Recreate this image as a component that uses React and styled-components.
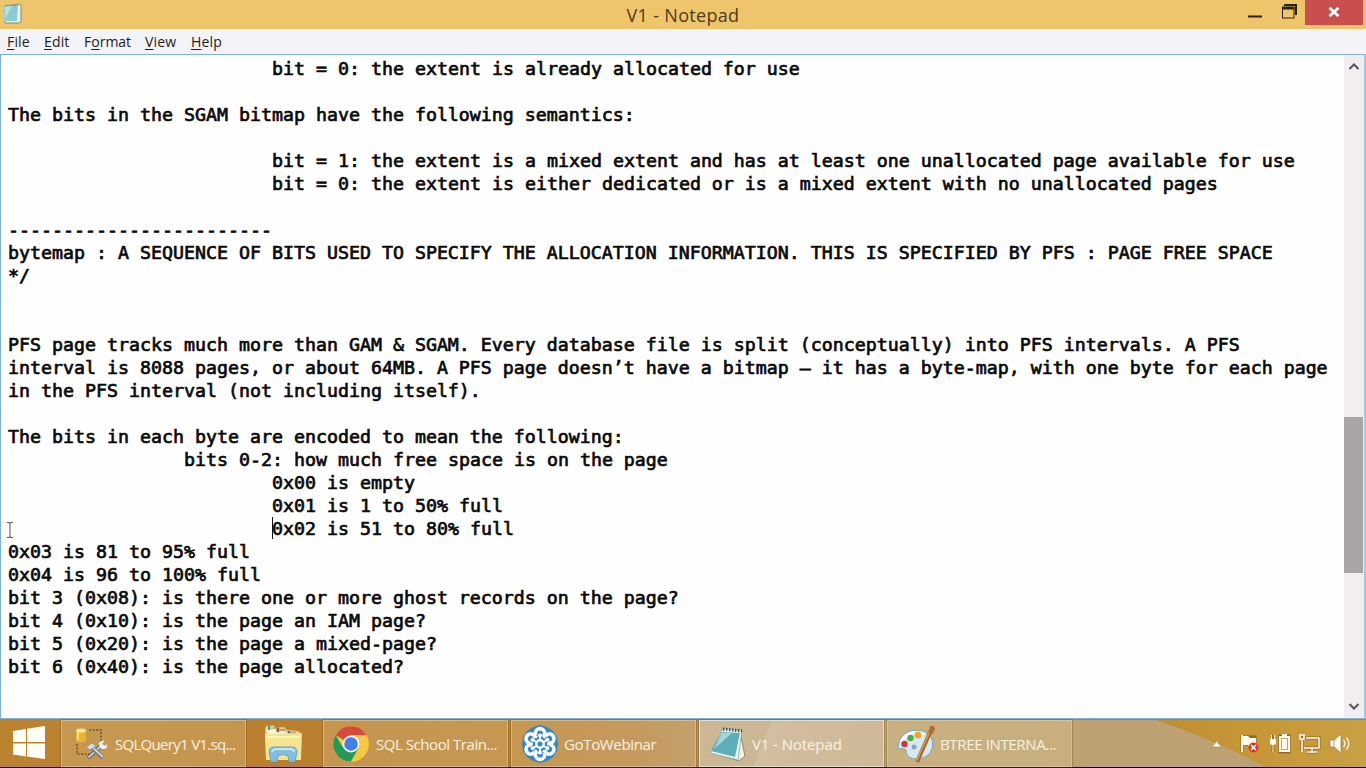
import React from "react";
import styled, { createGlobalStyle } from "styled-components";

const Global = createGlobalStyle`
  * { box-sizing: border-box; }
  body { margin: 0; overflow: hidden; background: #000; }
`;

const Screen = styled.div`
  width: 1366px;
  height: 768px;
  display: flex;
  flex-direction: column;
  font-family: "Open Sans", "Noto Sans", sans-serif;
  background: #000;
`;

const TitleBar = styled.header`
  height: 29px;
  flex: none;
  display: grid;
  grid-template-columns: 200px 1fr 200px;
  background: #efc56c;
`;

const AppIcon = styled.svg`
  margin: 3px 0 0 3px;
`;

const Title = styled.h1`
  margin: 0;
  padding-top: 1px;
  text-align: center;
  font-size: 18px;
  font-weight: 400;
  line-height: 28px;
  letter-spacing: ${(p) => p.$track}px;
  color: #4d3c18;
`;

const Controls = styled.div`
  display: flex;
  justify-content: flex-end;
  padding-right: 3px;
`;

const CloseButton = styled.div`
  width: 58px;
  height: 25px;
  margin-left: 7px;
  display: flex;
  align-items: center;
  justify-content: center;
  padding-bottom: 2px;
  background: #c94f4f;
`;

const MenuBar = styled.nav`
  height: 25px;
  flex: none;
  display: flex;
  padding-left: 7px;
  background: #f4f3f7;
`;

const MenuItem = styled.span`
  width: ${(p) => p.$w}px;
  font-size: 14px;
  line-height: 25px;
  letter-spacing: ${(p) => p.$track}px;
  white-space: nowrap;
  color: #1d1d20;
  u { text-decoration-thickness: 1px; text-underline-offset: 2px; }
`;

const Body = styled.main`
  height: 665px;
  flex: none;
  display: flex;
  border: 1px solid #7fb0d6;
  border-right-width: 2px;
  border-right-color: #9ccbe6;
  background: #fefefe;
`;

const Editor = styled.div`
  position: relative;
  flex: 1;
  padding: 2px 0 0 7px;
  font-family: "DejaVu Sans Mono", monospace;
  font-size: 18.271px;
  line-height: 23px;
  color: #0a0a0a;
  -webkit-text-stroke: 0.7px #0a0a0a;
`;

const Line = styled.div`
  height: 23px;
  padding-left: ${(p) => p.$indent * 11}px;
  white-space: pre;
`;

const Caret = styled.i`
  position: absolute;
  left: 271px;
  top: 462px;
  width: 1px;
  height: 22px;
  background: #111;
`;

const Pointer = styled.svg`
  position: absolute;
  left: 5px;
  top: 466px;
`;

const ScrollBar = styled.div`
  width: 20px;
  display: flex;
  flex-direction: column;
  align-items: center;
  justify-content: space-between;
  background: #f0eef1;
`;

const Thumb = styled.div`
  width: 20px;
  height: 156px;
  margin-top: 322px;
  margin-bottom: 105px;
  border-right: 1px solid #f0eef1;
  background: #a7a5a7;
`;

const TaskBar = styled.footer`
  height: 48px;
  flex: none;
  display: flex;
  align-items: stretch;
  border-top: 1px solid #8a8a70;
  background: linear-gradient(90deg, #bb8330 0, #b97f2f 250px, #ba8132 515px, #b98545 640px, #b49462 720px, #bda473 900px, #bda172 1100px, #bda172 1366px);
  position: relative;
`;

const Wallpaper = styled.svg`
  position: absolute;
  right: 0;
  top: 0;
`;

const Start = styled.div`
  width: 61px;
  display: flex;
  padding: 6px 0 0 12px;
`;

const Task = styled.div`
  width: 185px;
  margin-right: ${(p) => p.$gap || 3}px;
  display: flex;
  align-items: center;
  padding-left: ${(p) => p.$pad || 11}px;
  gap: ${(p) => p.$space}px;
  border: 1px solid ${(p) => (p.$active ? "#e6dcc8" : "rgba(236, 214, 168, 0.5)")};
  background: ${(p) => (p.$active
    ? "linear-gradient(112deg, #ccb794 0 66px, #d2bea0 67px, #cdb996 100%)"
    : "rgba(231, 208, 163, 0.28)")};
  box-shadow: 0 0 0 1px rgba(120, 80, 25, 0.35);
`;

const Label = styled.span`
  font-size: 15px;
  line-height: 20px;
  letter-spacing: ${(p) => p.$track}px;
  white-space: nowrap;
  color: #fbf2e2;
`;

const Pinned = styled.div`
  width: 76px;
  padding: 3px 0 0 15px;
`;

const Tray = styled.div`
  position: relative;
  flex: 1;
  display: flex;
  align-items: center;
  justify-content: flex-end;
  padding: 1px 15px 0 0;
`;

const NotepadSmall = () => (
  <AppIcon width="20" height="22" viewBox="0 0 20 22">
    <path d="M2 3L16 1l2 1v17l-2 1H2z" fill="#e9f3ee" stroke="#8a8a68" />
    <path d="M1 3l14-1-1 16H1z" fill="#8ccbd5" />
    <path d="M2 4l7-1-7 13z" fill="#b9e2e4" />
    <path d="M2 2.500h13" stroke="#5f8f92" strokeDasharray="1 1" />
  </AppIcon>
);

const WindowButtons = () => (
  <svg width="52" height="25" viewBox="0 0 52 25">
    <path d="M2 16.500h14" stroke="#292217" strokeWidth="2" />
    <path d="M38 5h12v10" fill="none" stroke="#292217" strokeWidth="2" />
    <rect x="36.500" y="8" width="11.500" height="10" fill="#efc56c" stroke="#292217" />
    <path d="M36 8h12.500" stroke="#292217" strokeWidth="3" />
  </svg>
);

const Chevron = ({ down }) => (
  <svg width="19" height="23" viewBox="0 0 19 23">
    <path d={down ? "M4.500 9l4.500 4.500L13.500 9" : "M4.500 14L9 9.500l4.500 4.500"} fill="none" stroke="#555" strokeWidth="2" />
  </svg>
);

const WindowsLogo = () => (
  <svg width="34" height="34" viewBox="0 0 34 34">
    <path d="M1 5l13-2v13H1zM15 2.800L33 0v16H15zM1 17.500h13v13L1 28.500zM15 17.500h18V33l-18-2.500z" fill="#fffdf5" />
  </svg>
);

const SqlIcon = () => (
  <svg width="34" height="36" viewBox="0 0 34 36">
    <path d="M15 4h12v11M3 18v10h12" fill="none" stroke="#6f5a2d" strokeWidth="1.500" strokeDasharray="2 1.500" />
    <path d="M2 4v10c0 3 10 3 10 0V4z" fill="#e9b42c" />
    <ellipse cx="7" cy="4.500" rx="5" ry="2" fill="#ffe69a" />
    <path d="M4 6v8" stroke="#fff1b8" strokeWidth="1.500" />
    <path d="M14 32L28 19" stroke="#5d6670" strokeWidth="4" />
    <path d="M14.500 31.500L28 19" stroke="#c3ccd3" strokeWidth="2" />
    <path d="M16 20l13 12" stroke="#77808a" strokeWidth="4" />
    <path d="M17 20l12 11" stroke="#e3e9ee" strokeWidth="1.500" />
    <path d="M12 21l6-4 4 3-6 4z" fill="#d5dde3" stroke="#7c858b" strokeWidth=".7" />
    <path d="M25 17q4-4 5-2l-2 3 3 2 2-2q1 5-4 5-4 0-4-6z" fill="#eef3f6" />
  </svg>
);

const FolderIcon = () => (
  <svg width="42" height="40" viewBox="0 0 42 40">
    <path d="M3 5l8-3 3 3 8-1 3 3 12 1 2 3v23H4z" fill="#ead27c" />
    <path d="M4 3h8l2 4h8l3 2h12v4H4z" fill="#f9f4d5" stroke="#c9a94e" strokeWidth=".7" />
    <path d="M7 3v4" stroke="#36a554" strokeWidth="2.500" />
    <path d="M16 5v4" stroke="#c04535" strokeWidth="2.500" />
    <path d="M27 8v3" stroke="#3679b8" strokeWidth="2.500" />
    <path d="M9 5h4M18 7h5M29 10h5" stroke="#77766a" />
    <path d="M3 11l37-1-1 27H4z" fill="#f4e391" />
    <path d="M4 14h34" stroke="#fff5b5" strokeWidth="2" />
    <path d="M9 39l-2-10q0-5 5-5h18q5 0 5 5l-2 10h-6l-1-6q-5-3-10 0l-1 6z" fill="#82bfdd" stroke="#559cc0" strokeWidth=".8" />
    <path d="M10 29q1-3 4-3h14q4 0 4 3" fill="none" stroke="#c7e9f4" strokeWidth="2" />
  </svg>
);

const ChromeIcon = () => (
  <svg width="36" height="36" viewBox="0 0 36 36">
    <circle cx="18" cy="18" r="17.700" fill="#f7c846" />
    <path d="M18 18L2.600 9.300A17.700 17.700 0 0 1 33.400 9.300H18z" fill="#d84a3c" />
    <path d="M2.700 9A17.700 17.700 0 0 0 18 35.700l7.600-13.400L18 18 10.400 22.300z" fill="#239a55" />
    <path d="M18 9.500h15.500A17.700 17.700 0 0 1 18 35.700l7.500-13.200z" fill="#f7c846" />
    <circle cx="18" cy="18" r="8.400" fill="#fff" />
    <circle cx="18" cy="18" r="6.800" fill="#4480e8" />
  </svg>
);

const petals = [0, 60, 120, 180, 240, 300];

const WebinarIcon = () => (
  <svg width="38" height="40" viewBox="0 0 38 40">
    <path d="M19 1l7 2 6 4 4 6 1 7-1 7-4 6-6 4-7 2-7-2-6-4-4-6-1-7 1-7 4-6 6-4z" fill="#3688bf" />
    {petals.map((a) => (
      <circle key={a} transform={`rotate(${a} 19 20)`} cx="19" cy="9.300" r="4.700" fill="none" stroke="#f9fcff" strokeWidth="3.600" />
    ))}
    <circle cx="19" cy="20" r="9.500" fill="#3688bf" />
    {petals.map((a) => (
      <g key={a} transform={`rotate(${a} 19 20)`}>
        <path d="M19 17v-6" stroke="#f9fcff" strokeWidth="2" />
        <circle cx="19" cy="11.500" r="2" fill="#f9fcff" />
        <path d="M23 10.500q-.500 2 1.500 2.500" fill="none" stroke="#f9fcff" strokeWidth="3.400" />
      </g>
    ))}
    <circle cx="19" cy="20" r="3.700" fill="#3688bf" stroke="#f9fcff" strokeWidth="2.400" />
  </svg>
);

const NotepadIcon = () => (
  <svg width="38" height="38" viewBox="0 0 38 38">
    <path d="M31 7l5 24-6 5-12-4z" fill="#f6f1df" stroke="#8e8873" />
    <path d="M14 3L33 5 29 35 1 28z" fill="#eaf4f0" stroke="#779ca0" strokeWidth=".7" />
    <path d="M13 7L31 8 26 32 2 26z" fill="#5eaeba" />
    <path d="M13 8L23 8 5 24z" fill="#a3d8dc" />
    <path d="M14 4l19 2" stroke="#514f43" strokeWidth="3" strokeDasharray="1.500 1.500" />
  </svg>
);

const PaintIcon = () => (
  <svg width="38" height="38" viewBox="0 0 38 38">
    <path d="M1 22C3 5 19 2 30 8c8 5 7 17 1 22-8 6-17 4-20 1-3-3 0-6-4-7-3-1-6 1-6-2z" fill="#d5e9f1" stroke="#7aa6bf" />
    <path d="M4 17C9 8 18 6 27 9" fill="none" stroke="#fff" strokeWidth="3" />
    <circle cx="7.500" cy="19" r="3.200" fill="#cc3941" />
    <circle cx="13.500" cy="13" r="3.200" fill="#4cac45" />
    <circle cx="21" cy="10" r="3.500" fill="#f1a72d" />
    <circle cx="17" cy="22" r="2.500" fill="#91a4bb" />
    <path d="M20 37L34 5" stroke="#9d642d" strokeWidth="4" />
    <path d="M19.500 36L33 6" stroke="#d79a56" strokeWidth="1.800" />
    <path d="M32 9l1-8q5-1 5 3l-3 6z" fill="#b86c30" />
  </svg>
);

const TrayIcons = () => (
  <svg width="140" height="24" viewBox="0 0 140 24">
    <path d="M1 15l4.700-6 4.700 6z" fill="#fffdf4" stroke="#9b7a36" strokeWidth=".6" />
    <g stroke="#6f551c" strokeWidth="3" fill="none" opacity=".65">
      <path d="M31 3v17M33 5h11v7H33M62 3v17M59 9h6M69 4h9v16h-9zM91 3v16M94 6h14v10H94M101 17v3M96 20h10" />
    </g>
    <g fill="#fffaf0">
      <path d="M30 3h2v17h-2zM32 4h5l2 2h6v9h-6l-2-2h-5z" />
      <path d="M60 3h1v4h2V3h1v4h1v4q0 2-2.500 2v7h-1v-7q-2.500 0-2.500-2V7h1zM68 4h3V2h5v2h3v16H68z" />
      <path d="M119 8h4l7-6v19l-7-6h-4z" />
    </g>
    <rect x="70.500" y="6.500" width="6" height="11" fill="none" stroke="#bba36d" />
    <g fill="none" stroke="#fffaf0" strokeWidth="1.500">
      <path d="M95 6h13v10H93M101 16v4M96 20h10M89 3v4h4V3zM91 8v12" />
    </g>
    <path d="M119 8h4v7h-4zM123 8l7-6v19l-7-6" fill="none" stroke="#967a42" strokeWidth=".7" />
    <path d="M132.500 8q3 3.500 0 7M135.500 5.500q4.500 6 0 12" fill="none" stroke="#fff7df" strokeWidth="1.300" />
    <circle cx="42.500" cy="15.500" r="5" fill="#d33934" />
    <path d="M40 13l5 5m0-5l-5 5" stroke="#fff" strokeWidth="1.500" />
  </svg>
);

const lines = [
  [24, "bit = 0: the extent is already allocated for use"],
  [0, ""],
  [0, "The bits in the SGAM bitmap have the following semantics:"],
  [0, ""],
  [24, "bit = 1: the extent is a mixed extent and has at least one unallocated page available for use"],
  [24, "bit = 0: the extent is either dedicated or is a mixed extent with no unallocated pages"],
  [0, ""],
  [0, "------------------------"],
  [0, "bytemap : A SEQUENCE OF BITS USED TO SPECIFY THE ALLOCATION INFORMATION. THIS IS SPECIFIED BY PFS : PAGE FREE SPACE"],
  [0, "*/"],
  [0, ""],
  [0, ""],
  [0, "PFS page tracks much more than GAM & SGAM. Every database file is split (conceptually) into PFS intervals. A PFS"],
  [0, "interval is 8088 pages, or about 64MB. A PFS page doesn’t have a bitmap – it has a byte-map, with one byte for each page"],
  [0, "in the PFS interval (not including itself)."],
  [0, ""],
  [0, "The bits in each byte are encoded to mean the following:"],
  [16, "bits 0-2: how much free space is on the page"],
  [24, "0x00 is empty"],
  [24, "0x01 is 1 to 50% full"],
  [24, "0x02 is 51 to 80% full"],
  [0, "0x03 is 81 to 95% full"],
  [0, "0x04 is 96 to 100% full"],
  [0, "bit 3 (0x08): is there one or more ghost records on the page?"],
  [0, "bit 4 (0x10): is the page an IAM page?"],
  [0, "bit 5 (0x20): is the page a mixed-page?"],
  [0, "bit 6 (0x40): is the page allocated?"],
];

export default function App() {
  return (
    <Screen>
      <Global />
      <TitleBar>
        <NotepadSmall />
        <Title $track={0.32}>V1 - Notepad</Title>
        <Controls>
          <WindowButtons />
          <CloseButton>
            <svg width="12" height="10" viewBox="0 0 12 10">
              <path d="M1.500 .8l9 8.400m0-8.400l-9 8.400" stroke="#fff" strokeWidth="2.800" />
            </svg>
          </CloseButton>
        </Controls>
      </TitleBar>
      <MenuBar>
        <MenuItem $w={37} $track={0.15}><u>F</u>ile</MenuItem>
        <MenuItem $w={40} $track={0.15}><u>E</u>dit</MenuItem>
        <MenuItem $w={61} $track={0}><span>F<u>o</u>rmat</span></MenuItem>
        <MenuItem $w={46} $track={0.15}><u>V</u>iew</MenuItem>
        <MenuItem $w={40} $track={0.2}><u>H</u>elp</MenuItem>
      </MenuBar>
      <Body>
        <Editor>
          {lines.map(([indent, text], i) => (
            <Line key={i} $indent={indent}>{text}</Line>
          ))}
          <Caret />
          <Pointer width="8" height="18" viewBox="0 0 8 18">
            <path d="M1 1.500h2.500q.5 0 .5 1 0-1 .5-1H7M4 2v14M1 16.500h2.500q.5 0 .5-1 0 1 .5 1H7" fill="none" stroke="#555" />
          </Pointer>
        </Editor>
        <ScrollBar>
          <Chevron />
          <Thumb />
          <Chevron down />
        </ScrollBar>
      </Body>
      <TaskBar>
        <Wallpaper width="306" height="47" viewBox="0 0 306 47">
          <defs>
            <linearGradient id="gold" x1="0" y1="0" x2="1" y2="0">
              <stop offset="0" stopColor="#c08e35" />
              <stop offset=".4" stopColor="#c69535" />
              <stop offset="1" stopColor="#c8a044" />
            </linearGradient>
          </defs>
          <path d="M96 0H306V47H205C178 32 145 17 96 0z" fill="url(#gold)" />
        </Wallpaper>
        <Start><WindowsLogo /></Start>
        <Task $gap={1} $pad={12} $space={7}>
          <SqlIcon />
          <Label $track={-0.7}>SQLQuery1 V1.sq...</Label>
        </Task>
        <Pinned><FolderIcon /></Pinned>
        <Task $pad={9} $space={7}>
          <ChromeIcon />
          <Label $track={-0.45}>SQL School Train...</Label>
        </Task>
        <Task $pad={9} $space={5}>
          <WebinarIcon />
          <Label $track={-0.35}>GoToWebinar</Label>
        </Task>
        <Task $active $pad={9} $space={5}>
          <NotepadIcon />
          <Label $track={-0.1}>V1 - Notepad</Label>
        </Task>
        <Task $pad={9} $space={5}>
          <PaintIcon />
          <Label $track={-0.35}>BTREE INTERNA...</Label>
        </Task>
        <Tray><TrayIcons /></Tray>
      </TaskBar>
    </Screen>
  );
}
